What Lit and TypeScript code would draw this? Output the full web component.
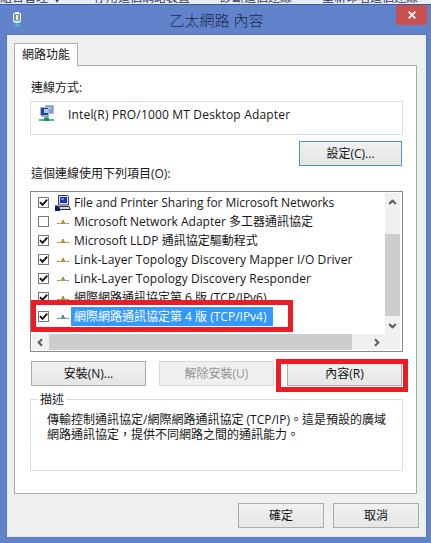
import { LitElement, html, css, svg } from "lit";
import { customElement, property } from "lit/decorators.js";
import { classMap } from "lit/directives/class-map.js";

interface Item { label: string; checked: boolean; kind: "pc" | "proto"; selected?: boolean; spacing?: "tight" | "loose" }

const ITEMS: Item[] = [
  { label: "File and Printer Sharing for Microsoft Networks", checked: true, kind: "pc", spacing: "tight" },
  { label: "Microsoft Network Adapter 多工器通訊協定", checked: false, kind: "proto" },
  { label: "Microsoft LLDP 通訊協定驅動程式", checked: true, kind: "proto" },
  { label: "Link-Layer Topology Discovery Mapper I/O Driver", checked: true, kind: "proto", spacing: "loose" },
  { label: "Link-Layer Topology Discovery Responder", checked: true, kind: "proto", spacing: "loose" },
  { label: "網際網路通訊協定第 6 版 (TCP/IPv6)", checked: true, kind: "proto" },
  { label: "網際網路通訊協定第 4 版 (TCP/IPv4)", checked: true, kind: "proto", selected: true },
];

const pcIcon = html`<svg width="16" height="16" viewBox="0 0 16 16">
  <path d="M3.500 .5h9l1 1v8.500h-10z" fill="#e4e4ea" stroke="#3a3a50"/>
  <path d="M5 2h7v6H5z" fill="#1a2fd0"/><path d="M6 3h3v2H6z" fill="#6f8df4"/>
  <path d="M4.500 11.500h9.500l1.500 3H3.500z" fill="#d6d6dc" stroke="#2c2c40"/>
  <path d="M0 10.500h3l2 3V16H0z" fill="#10186c"/>
</svg>`;

const protoIcon = (selected: boolean) => html`<svg width="12" height="6" viewBox="0 0 12 6">
  <path d="M0 4.500h12" stroke=${selected ? "#6d8797" : "#94907c"} stroke-width="1"/>
  <path d="M5 1h2v2h1v2H4V3h1z" fill=${selected ? "#63879d" : "#b5923c"}/>
  <path d="M2 4h2v1H2zM8 4h2v1H8z" fill=${selected ? "#86a9bd" : "#c9ad5c"}/>
</svg>`;

const chevron = (d: string) => html`<svg width="9" height="9" viewBox="0 0 9 9">
  ${svg`<path d=${d} fill="none" stroke="#5a5a5a" stroke-width="2"/>`}</svg>`;

@customElement("dialog-button")
class DialogButton extends LitElement {
  @property({ type: Boolean, reflect: true }) disabled = false;
  static styles = css`
    :host { display: block; box-sizing: border-box; height: 25px; border: 1px solid #acacac;
      background: linear-gradient(#f1f1f1, #e5e5e5); text-align: center; line-height: 23px; color: #111; }
    :host([disabled]) { border-color: #d9d9d9; background: #efefef; color: #929292; }
  `;
  render() { return html`<slot></slot>`; }
}

@customElement("item-row")
class ItemRow extends LitElement {
  @property({ attribute: false }) item!: Item;
  static styles = css`
    :host { display: flex; align-items: center; height: 19px; }
    .box { box-sizing: border-box; width: 11px; height: 11px; border: 1px solid #777; background: #fff; margin-left: 6px; display: flex; flex: none; }
    .icon { width: 16px; margin-left: 6px; display: flex; justify-content: center; flex: none; }
    .icon.proto { padding-top: 1px; }
    .label { height: 19px; line-height: 19px; padding: 0 5px 0 2px; margin-left: 1px; white-space: pre; }
    .tight { letter-spacing: -.05px; }
    .loose { letter-spacing: .11px; }
    .selected { background: #3399ff; color: #fff; margin-left: 0; padding: 0 6px 0 3px; }
  `;
  render() {
    const { label, checked, kind, selected = false, spacing } = this.item;
    return html`<span class="box">${checked ? html`<svg width="9" height="9" viewBox="0 0 9 9">
        <path d="M1 4.200L3.500 6.800L8.200 1.600" fill="none" stroke="#111" stroke-width="1.900"/></svg>` : ""}</span>
      <span class=${classMap({ icon: true, proto: kind === "proto" })}>${kind === "pc" ? pcIcon : protoIcon(selected)}</span>
      <span class=${classMap({ label: true, selected, tight: spacing === "tight", loose: spacing === "loose" })}>${label}</span>`;
  }
}

@customElement("app-root")
class AppRoot extends LitElement {
  static styles = css`
    :host { display: flex; flex-direction: column; position: relative; width: 431px; height: 543px; overflow: hidden;
      background: #6083cc; color: #151515; font: 12px "Open Sans", "Noto Sans CJK TC", sans-serif; }
    * { box-sizing: border-box; }
    .behind { height: 5px; overflow: hidden; display: flex; background: #e9edf6; color: #26375d; border-bottom: 1px solid #3d5b9b; flex: none; white-space: pre; }
    .behind span { line-height: 16px; height: 16px; margin-top: -10px; flex: none; }
    .c1 { width: 94px; } .c2 { width: 126px; } .c3 { width: 102px; }
    .titlebar { height: 30px; display: grid; grid-template-columns: 31px 1fr 31px; padding: 0 4px 0 0; flex: none; }
    .nic { margin: 6px 0 0 12px; }
    .title { text-align: center; font-size: 15px; font-weight: 300; line-height: 30px; color: #1c2a4c; padding-left: 6px; }
    .close { height: 20px; background: #c75050; display: flex; align-items: center; justify-content: center; }
    .client { margin: 0 5px 7px 7px; flex: 1; background: #efeff0; padding: 8px 7px 9px 7px; display: flex; flex-direction: column; box-shadow: 0 0 0 1px #5878bd; }
    .tab { width: 64px; height: 23px; border: 1px solid #acacac; border-bottom: 0; background: #fff; text-align: center; line-height: 21px; margin-bottom: -1px; position: relative; }
    .panel { width: 403px; height: 429px; border: 1px solid #acacac; background: #fff; padding: 14px 13px 0 15px; display: flex; flex-direction: column; }
    .caption { height: 16px; line-height: 16px; padding-left: 1px; }
    .adapter { height: 34px; border: 1px solid #dcdcdc; margin-top: 5px; display: flex; padding: 3px 0 0 8px; }
    .adapter span { margin-left: 13px; line-height: 19px; white-space: pre; letter-spacing: .17px; }
    .settings { width: 103px; margin: 6px 1px 0 auto; border-color: #4f94bd; }
    .list { height: 161px; border: 1px solid #828790; margin-top: 9px; display: grid; padding: 1px 2px 1px 1px; grid-template: 141px 16px / 1fr 15px; }
    .rows { overflow: hidden; }
    .vbar { background: #f0f0f0; display: grid; grid-template-rows: 41px 82px 18px; justify-items: center; }
    .vbar svg { margin-top: 5px; }
    .thumb { background: #cdcdcd; align-self: stretch; justify-self: stretch; }
    .hbar { grid-column: 1 / 3; background: #f0f0f0; display: grid; grid-template-columns: 17px 303px 1fr; align-items: center; justify-items: center; }
    .actions { display: grid; grid-template-columns: repeat(3, 115px); gap: 13px; margin: 9px 0 0 1px; }
    fieldset { margin: 6px 0 0; border: 1px solid #dcdcdc; height: 79px; padding: 5px 0 0 16px; min-width: 0; }
    legend { margin-left: -9px; padding: 0 2px; line-height: 15px; height: 15px; }
    .desc { line-height: 15px; white-space: pre; }
    .footer { display: flex; justify-content: flex-end; gap: 9px; margin-top: 9px; }
    .footer dialog-button { width: 86px; }
    .mark { position: absolute; border: 5px solid #ed1c24; }
    .m1 { left: 31px; top: 300px; width: 262px; height: 32px; }
    .m2 { left: 276px; top: 359px; width: 132px; height: 33px; }
  `;
  render() {
    return html`
      <div class="behind"><span class="c1">組合管理 ▼</span><span class="c2">停用這個網路裝置</span><span class="c3">診斷這個連線</span><span>重新命名這個連線</span></div>
      <div class="titlebar">
        <svg class="nic" width="10" height="17" viewBox="0 0 10 17"><path d="M1.500 2.500h7v8h-7z" fill="#7d9996" stroke="#e8f0f3"/>
          <path d="M3 1h4v2H3z" fill="#eef4f6"/><path d="M4 4h2v5H4z" fill="#e9f0ee"/><path d="M2 11h6v1H2z" fill="#cfe0e8"/><path d="M4 12h2v2H4zM2 14h6v1.500H2z" fill="#43c1d6"/></svg>
        <div class="title">乙太網路 內容</div>
        <div class="close"><svg width="8" height="8" viewBox="0 0 8 8"><path d="M.7.7l6.600 6.600M7.300.7L.7 7.300" stroke="#fff" stroke-width="1.700"/></svg></div>
      </div>
      <div class="client">
        <div class="tab">網路功能</div>
        <div class="panel">
          <div class="caption">連線方式:</div>
          <div class="adapter">
            <svg width="16" height="17" viewBox="0 0 16 17"><path d="M6.500 .5h8v8h-8z" fill="#8c9cd0" stroke="#aab4cc"/><path d="M8 2h4v2H8z" fill="#b4c6ee"/>
              <path d="M1.500 2.500h8v8h-8z" fill="#2440b0" stroke="#a9b6d4"/><path d="M5 4h4v4H5z" fill="#a6d2f4"/>
              <path d="M3 11h7v1H3z" fill="#8792a8"/><path d="M6 12h3v2h6v2H0v-2h6z" fill="#5cba86"/><path d="M5 13h5v3H5z" fill="#218b54"/></svg>
            <span>Intel(R) PRO/1000 MT Desktop Adapter</span>
          </div>
          <dialog-button class="settings">設定(C)...</dialog-button>
          <div class="caption">這個連線使用下列項目(O):</div>
          <div class="list">
            <div class="rows">${ITEMS.map((item) => html`<item-row .item=${item}></item-row>`)}</div>
            <div class="vbar">${chevron("M1.2 6L4.500 2.700L7.800 6")}<div class="thumb"></div>${chevron("M1.2 3L4.500 6.300L7.800 3")}</div>
            <div class="hbar">${chevron("M6 1.200L2.700 4.500L6 7.800")}<div class="thumb"></div>${chevron("M3 1.200L6.300 4.500L3 7.800")}</div>
          </div>
          <div class="actions">
            <dialog-button>安裝(N)...</dialog-button><dialog-button disabled>解除安裝(U)</dialog-button><dialog-button>內容(R)</dialog-button>
          </div>
          <fieldset><legend>描述</legend><div class="desc">傳輸控制通訊協定/網際網路通訊協定 (TCP/IP)。這是預設的廣域
網路通訊協定，提供不同網路之間的通訊能力。</div></fieldset>
        </div>
        <div class="footer"><dialog-button>確定</dialog-button><dialog-button>取消</dialog-button></div>
      </div>
      <div class="mark m1"></div><div class="mark m2"></div>`;
  }
}
